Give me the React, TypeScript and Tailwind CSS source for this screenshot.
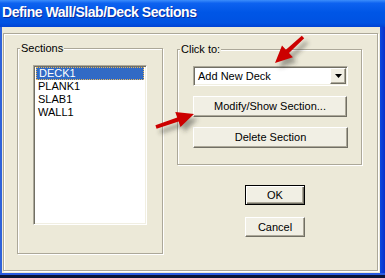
import React from "react";

type Pt = [number, number];

function arrowPoints(tail: Pt, tip: Pt, shaft = 4.5, headLen = 17, headW = 16): string {
  const dx = tip[0] - tail[0];
  const dy = tip[1] - tail[1];
  const len = Math.hypot(dx, dy);
  const ux = dx / len;
  const uy = dy / len;
  const nx = -uy;
  const ny = ux;
  const bx = tip[0] - ux * headLen;
  const by = tip[1] - uy * headLen;
  const pts: Pt[] = [
    [tail[0] + (nx * (shaft - 1)) / 2, tail[1] + (ny * (shaft - 1)) / 2],
    [bx + (nx * shaft) / 2, by + (ny * shaft) / 2],
    [bx + (nx * headW) / 2, by + (ny * headW) / 2],
    [tip[0], tip[1]],
    [bx - (nx * headW) / 2, by - (ny * headW) / 2],
    [bx - (nx * shaft) / 2, by - (ny * shaft) / 2],
    [tail[0] - (nx * (shaft - 1)) / 2, tail[1] - (ny * (shaft - 1)) / 2],
  ];
  return pts.map((p) => `${p[0].toFixed(1)},${p[1].toFixed(1)}`).join(" ");
}

function Arrows() {
  const a1 = arrowPoints([303, 37], [275, 63]);
  const a2 = arrowPoints([156, 127], [194, 114]);
  return (
    <svg className="absolute left-0 top-0 pointer-events-none" width="385" height="278" viewBox="0 0 385 278">
      <defs>
        <filter id="blur" x="-20%" y="-20%" width="140%" height="140%">
          <feGaussianBlur stdDeviation="2" />
        </filter>
      </defs>
      <g filter="url(#blur)" fill="rgba(60,60,50,0.45)" transform="translate(4,5)">
        <polygon points={a1} />
        <polygon points={a2} />
      </g>
      <polygon points={a1} fill="#CC0000" />
      <polygon points={a2} fill="#CC0000" />
    </svg>
  );
}

const btn =
  "flex items-center justify-center bg-[#F1EFE4] border border-t-white border-l-white border-b-[#716F64] border-r-[#716F64] shadow-[inset_-1px_-1px_0_#ACA899] text-[11px] text-black leading-none";

export default function App() {
  return (
    <div className="relative w-[385px] h-[278px] flex flex-col overflow-hidden font-['Liberation_Sans',Arial,sans-serif] select-none">
      {/* Title bar */}
      <div className="h-[27px] shrink-0 bg-[linear-gradient(180deg,#3C8DFB_0%,#0D62F0_12%,#0056E6_45%,#0052E2_85%,#0043D4_100%)] flex items-start pl-[2px] pt-[4px]">
        <span className="text-white font-bold text-[14px] leading-[17px] tracking-[-0.45px] [text-shadow:1px_1px_0_#0A2A9A]">
          Define Wall/Slab/Deck Sections
        </span>
      </div>

      {/* Middle */}
      <div className="flex-1 flex">
        <div className="w-[2px] bg-[#2E62DA]" />
        <div className="flex-1 bg-[#ECE9D8] flex pl-[1px] pr-[2px] pt-[6px] pb-[2px]">
          {/* etched frame */}
          <div className="flex-1 border border-[#ACA899] shadow-[inset_1px_1px_0_#fff,1px_1px_0_#fff] flex pl-[13px] pt-[14px]">
            {/* Sections group */}
            <div className="w-[146px] h-[206px] border border-[#ACA899] shadow-[inset_1px_1px_0_#fff,1px_1px_0_#fff] flex flex-col">
              <span className="self-start -mt-[7px] ml-[2px] px-[1px] bg-[#ECE9D8] text-[11px] leading-[13px] text-black">
                Sections
              </span>
              <div className="ml-[15px] mt-[10px] w-[114px] h-[160px] bg-white border border-t-[#ACA899] border-l-[#ACA899] border-b-white border-r-white shadow-[inset_1px_1px_0_#716F64,inset_-1px_-1px_0_#F1EFE2] p-[1px] flex flex-col text-[11px] leading-[13px] text-black">
                <div className="h-[13px] mx-[1px] bg-[#316AC5] text-white border border-dotted border-[#E6B75A] pl-[2px] leading-[11px]">
                  DECK1
                </div>
                <div className="h-[13px] pl-[3px]">PLANK1</div>
                <div className="h-[13px] pl-[3px]">SLAB1</div>
                <div className="h-[13px] pl-[3px]">WALL1</div>
              </div>
            </div>

            {/* Right column */}
            <div className="ml-[14px] w-[185px] flex flex-col">
              <div className="mt-[1px] h-[116px] border border-[#ACA899] shadow-[inset_1px_1px_0_#fff,1px_1px_0_#fff] flex flex-col">
                <span className="self-start -mt-[7px] ml-[2px] px-[1px] bg-[#ECE9D8] text-[11px] leading-[13px] text-black">
                  Click to:
                </span>
                <div className="ml-[15px] mt-[10px] w-[155px] h-[20px] bg-white border border-t-[#ACA899] border-l-[#ACA899] border-b-white border-r-white shadow-[inset_1px_1px_0_#716F64,inset_-1px_-1px_0_#F1EFE2] flex items-center p-[1px]">
                  <span className="flex-1 pl-[3px] text-[11px] leading-none text-black">Add New Deck</span>
                  <div className="w-[16px] h-[16px] bg-[#F1EFE4] border border-t-white border-l-white border-b-[#716F64] border-r-[#716F64] shadow-[inset_-1px_-1px_0_#ACA899] flex items-center justify-center">
                    <svg width="7" height="4" viewBox="0 0 7 4">
                      <polygon points="0,0 7,0 3.5,4" fill="#000" />
                    </svg>
                  </div>
                </div>
                <div className={`ml-[15px] mt-[10px] w-[154px] h-[21px] ${btn}`}>Modify/Show Section...</div>
                <div className={`ml-[15px] mt-[10px] w-[155px] h-[21px] ${btn}`}>Delete Section</div>
              </div>

              <div className="ml-[68px] mt-[20px] w-[60px] h-[20px] bg-[#F1EFE4] border border-black shadow-[inset_1px_1px_0_#fff,inset_-1px_-1px_0_#716F64,inset_-2px_-2px_0_#ACA899] flex items-center justify-center text-[11px] leading-none text-black">
                OK
              </div>
              <div className={`ml-[68px] mt-[12px] w-[60px] h-[20px] ${btn}`}>Cancel</div>
            </div>
          </div>
        </div>
        <div className="w-[5px] bg-[linear-gradient(90deg,#0A4BE0,#0831C9)]" />
      </div>

      {/* Bottom */}
      <div className="h-[2px] shrink-0 bg-[#2A5BE0]" />
      <div className="h-[3px] shrink-0 bg-[#0B1535]" />

      <Arrows />
    </div>
  );
}
